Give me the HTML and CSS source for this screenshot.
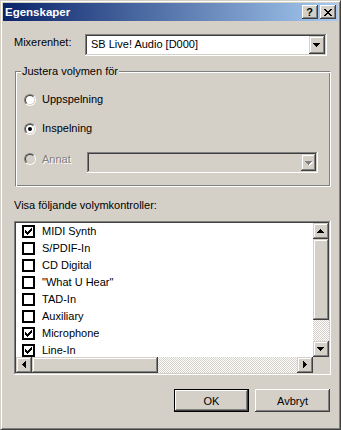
FILE: index.html
```html
<!DOCTYPE html>
<html>
<head>
<meta charset="utf-8">
<title>Egenskaper</title>
<link rel="stylesheet" href="styles.css">
</head>
<body>
<div class="window">
  <div class="titlebar">
    <span class="title">Egenskaper</span>
    <div class="capbtns">
      <div class="capbtn help">?</div>
      <div class="capbtn close">
        <svg width="8" height="7" viewBox="0 0 8 7"><path d="M0 0h2v1h-2zM6 0h2v1h-2zM1 1h2v1h-2zM5 1h2v1h-2zM2 2h4v1h-4zM3 3h2v1h-2zM2 4h4v1h-4zM1 5h2v1h-2zM5 5h2v1h-2zM0 6h2v1h-2zM6 6h2v1h-2z" fill="#000"/></svg>
      </div>
    </div>
  </div>
  <div class="content">
    <div class="row-mixer">
      <span class="mixer-label">Mixerenhet:</span>
      <div class="combo combo-wide">
        <span class="combo-text">SB Live! Audio [D000]</span>
        <div class="dropbtn raised-s">
          <svg width="16" height="16" viewBox="0 0 16 16"><path d="M4 7h7v1h-1v1h-1v1h-1v1h-1v-1h-1v-1h-1v-1h-1z" fill="#000"/></svg>
        </div>
      </div>
    </div>

    <div class="group">
      <div class="legend">Justera volymen för</div>
      <div class="radio-row r1"><span class="radio"></span><span>Uppspelning</span></div>
      <div class="radio-row r2"><span class="radio checked"></span><span>Inspelning</span></div>
      <div class="radio-row r3">
        <span class="radio disabled"></span><span class="annat">Annat</span>
        <div class="combo combo-small">
          <span class="combo-text"></span>
          <div class="dropbtn-small raised-s">
            <svg width="15" height="17" viewBox="0 0 15 17"><path d="M5 8h7v1h-1v1h-1v1h-1v1h-1v-1h-1v-1h-1v-1h-1z" fill="#fff"/><path d="M4 7h7v1h-1v1h-1v1h-1v1h-1v-1h-1v-1h-1v-1h-1z" fill="#808080"/></svg>
          </div>
        </div>
      </div>
    </div>

    <div class="visa">Visa följande volymkontroller:</div>

    <div class="listbox">
      <div class="list">
        <div class="item"><svg class="cb" width="13" height="13" viewBox="0 0 13 13"><rect x="1" y="1" width="11" height="11" fill="#fff" stroke="#000" stroke-width="2"/><path class="tick" d="M3 5L3 8L4 8L4 9L5 9L5 10L6 10L6 9L7 9L7 8L8 8L8 7L9 7L9 6L10 6L10 3L9 3L9 4L8 4L8 5L7 5L7 6L6 6L6 7L5 7L5 6L4 6L4 5Z"/></svg><span>MIDI Synth</span></div>
        <div class="item"><svg class="cb" width="13" height="13" viewBox="0 0 13 13"><rect x="1" y="1" width="11" height="11" fill="#fff" stroke="#000" stroke-width="2"/></svg><span>S/PDIF-In</span></div>
        <div class="item"><svg class="cb" width="13" height="13" viewBox="0 0 13 13"><rect x="1" y="1" width="11" height="11" fill="#fff" stroke="#000" stroke-width="2"/></svg><span>CD Digital</span></div>
        <div class="item"><svg class="cb" width="13" height="13" viewBox="0 0 13 13"><rect x="1" y="1" width="11" height="11" fill="#fff" stroke="#000" stroke-width="2"/></svg><span>"What U Hear"</span></div>
        <div class="item"><svg class="cb" width="13" height="13" viewBox="0 0 13 13"><rect x="1" y="1" width="11" height="11" fill="#fff" stroke="#000" stroke-width="2"/></svg><span>TAD-In</span></div>
        <div class="item"><svg class="cb" width="13" height="13" viewBox="0 0 13 13"><rect x="1" y="1" width="11" height="11" fill="#fff" stroke="#000" stroke-width="2"/></svg><span>Auxiliary</span></div>
        <div class="item"><svg class="cb" width="13" height="13" viewBox="0 0 13 13"><rect x="1" y="1" width="11" height="11" fill="#fff" stroke="#000" stroke-width="2"/><path class="tick" d="M3 5L3 8L4 8L4 9L5 9L5 10L6 10L6 9L7 9L7 8L8 8L8 7L9 7L9 6L10 6L10 3L9 3L9 4L8 4L8 5L7 5L7 6L6 6L6 7L5 7L5 6L4 6L4 5Z"/></svg><span>Microphone</span></div>
        <div class="item"><svg class="cb" width="13" height="13" viewBox="0 0 13 13"><rect x="1" y="1" width="11" height="11" fill="#fff" stroke="#000" stroke-width="2"/><path class="tick" d="M3 5L3 8L4 8L4 9L5 9L5 10L6 10L6 9L7 9L7 8L8 8L8 7L9 7L9 6L10 6L10 3L9 3L9 4L8 4L8 5L7 5L7 6L6 6L6 7L5 7L5 6L4 6L4 5Z"/></svg><span>Line-In</span></div>
      </div>
      <div class="vscroll">
        <div class="sbtn raised-s"><svg width="16" height="16" viewBox="0 0 16 16"><path d="M7 6h1v1h1v1h1v1h1v1h-7v-1h1v-1h1v-1h1z" fill="#000"/></svg></div>
        <div class="vthumb raised-s"></div>
        <div class="track"></div>
        <div class="sbtn raised-s"><svg width="16" height="16" viewBox="0 0 16 16"><path d="M4 6h7v1h-1v1h-1v1h-1v1h-1v-1h-1v-1h-1v-1h-1z" fill="#000"/></svg></div>
      </div>
      <div class="hscroll">
        <div class="sbtn raised-s"><svg width="16" height="16" viewBox="0 0 16 16"><path d="M6 7h1v-1h1v-1h1v-1h1v7h-1v-1h-1v-1h-1v-1h-1z" fill="#000"/></svg></div>
        <div class="hthumb raised-s"></div>
        <div class="track"></div>
        <div class="sbtn raised-s"><svg width="16" height="16" viewBox="0 0 16 16"><path d="M6 4h1v1h1v1h1v1h1v1h-1v1h-1v1h-1v1h-1z" fill="#000"/></svg></div>
      </div>
      <div class="corner"></div>
    </div>

    <div class="buttons">
      <button class="btn btn-default">OK</button>
      <button class="btn">Avbryt</button>
    </div>
  </div>
</div>
</body>
</html>
```

FILE: styles.css
```css
html, body {
  margin: 0;
  padding: 0;
}
body {
  width: 341px;
  height: 430px;
  overflow: hidden;
  background: #d4d0c8;
  font-family: "Liberation Sans", Arial, sans-serif;
  font-size: 11px;
  line-height: 13px;
  color: #000;
}
.window {
  box-sizing: border-box;
  width: 341px;
  height: 430px;
  border: 1px solid;
  border-color: #d4d0c8 #404040 #404040 #d4d0c8;
  box-shadow: inset 1px 1px #fff, inset -1px -1px #808080;
  padding: 2px;
  background: #d4d0c8;
  display: flex;
  flex-direction: column;
}
.titlebar {
  height: 18px;
  flex: none;
  background: linear-gradient(to right, #0a246a, #a6caf0);
  display: flex;
  align-items: center;
  justify-content: space-between;
}
.title {
  color: #fff;
  font-weight: bold;
  font-size: 11.5px;
  padding-left: 2px;
}
.capbtns {
  display: flex;
  gap: 2px;
  margin-right: 2px;
}
.capbtn {
  width: 16px;
  height: 14px;
  box-sizing: border-box;
  background: #d4d0c8;
  box-shadow: inset -1px -1px #404040, inset 1px 1px #fff, inset -2px -2px #808080, inset 2px 2px #d4d0c8;
  display: flex;
  align-items: center;
  justify-content: center;
}
.help {
  font-weight: bold;
  font-size: 11px;
  line-height: 14px;
  padding-right: 1px;
}
.close svg {
  display: block;
  margin-left: -1px;
}
.raised-s {
  background: #d4d0c8;
  box-shadow: inset -1px -1px #404040, inset 1px 1px #d4d0c8, inset -2px -2px #808080, inset 2px 2px #fff;
}
.content {
  flex: 1;
  padding: 13px 7px 0 11px;
  display: flex;
  flex-direction: column;
}
.row-mixer {
  display: flex;
  height: 22px;
}
.mixer-label {
  width: 71px;
  flex: none;
  margin-top: 2px;
}
.combo {
  box-sizing: border-box;
  padding: 2px;
  background: #fff;
  box-shadow: inset -1px -1px #fff, inset 1px 1px #808080, inset -2px -2px #d4d0c8, inset 2px 2px #404040;
  display: flex;
}
.combo-wide {
  width: 242px;
  height: 22px;
}
.combo-text {
  flex: 1;
  padding: 2px 0 0 4px;
}
.dropbtn {
  width: 16px;
  height: 18px;
  flex: none;
}
.dropbtn svg, .dropbtn-small svg, .sbtn svg {
  display: block;
}
.group {
  box-sizing: border-box;
  margin: 15px 0 0 1px;
  width: 316px;
  height: 116px;
  border: 1px solid;
  border-color: #808080 #fff #fff #808080;
  box-shadow: inset 1px 1px #fff, inset -1px -1px #808080;
  padding-left: 8px;
  display: flex;
  flex-direction: column;
  align-items: flex-start;
}
.legend {
  margin: -7px 0 0 -3px;
  padding: 0 1px;
  background: #d4d0c8;
  height: 13px;
}
.radio-row {
  display: flex;
  align-items: flex-start;
  height: 13px;
}
.r1 { margin-top: 15px; }
.r2 { margin-top: 16px; }
.r3 { margin-top: 17px; height: 21px; }
.radio {
  position: relative;
  flex: none;
  box-sizing: border-box;
  width: 12px;
  height: 12px;
  margin: 1px 6px 0 0;
  border-radius: 50%;
  border: 1px solid;
  border-color: #808080 #fff #fff #808080;
}
.radio::before {
  content: "";
  display: block;
  box-sizing: border-box;
  width: 10px;
  height: 10px;
  border-radius: 50%;
  border: 1px solid;
  border-color: #404040 #d4d0c8 #d4d0c8 #404040;
  background: #fff;
}
.radio.checked::after {
  content: "";
  position: absolute;
  left: 3px;
  top: 3px;
  width: 4px;
  height: 4px;
  border-radius: 50%;
  background: #000;
}
.radio.disabled::before {
  background: #d4d0c8;
}
.annat {
  width: 45px;
  flex: none;
  color: #808080;
  text-shadow: 1px 1px #fff;
  margin-top: 1px;
}
.combo-small {
  width: 231px;
  height: 21px;
  background: #d4d0c8;
}
.dropbtn-small {
  width: 15px;
  height: 17px;
  flex: none;
}
.visa {
  margin-top: 12px;
}
.listbox {
  margin-top: 9px;
  box-sizing: border-box;
  width: 317px;
  height: 154px;
  padding: 2px;
  background: #fff;
  box-shadow: inset -1px -1px #fff, inset 1px 1px #808080, inset -2px -2px #d4d0c8, inset 2px 2px #404040;
  display: grid;
  grid-template-columns: 297px 16px;
  grid-template-rows: 134px 16px;
}
.list {
  overflow: hidden;
}
.item {
  height: 17px;
  display: flex;
  align-items: center;
  padding-left: 6px;
}
.cb {
  display: block;
  flex: none;
  margin-right: 7px;
}
.tick {
  fill: #000;
}
.vscroll {
  display: flex;
  flex-direction: column;
}
.hscroll {
  display: flex;
}
.sbtn {
  width: 16px;
  height: 16px;
  flex: none;
}
.vthumb {
  height: 81px;
  flex: none;
}
.hthumb {
  width: 126px;
  flex: none;
}
.track {
  flex: 1;
  background-color: #fff;
  background-image: conic-gradient(#d4d0c8 25%, #fff 0 50%, #d4d0c8 0 75%, #fff 0);
  background-size: 2px 2px;
}
.corner {
  background: #d4d0c8;
}
.buttons {
  display: flex;
  justify-content: flex-end;
  gap: 6px;
  margin-top: 14px;
  padding-right: 1px;
}
.btn {
  width: 75px;
  height: 23px;
  box-sizing: border-box;
  margin: 0;
  padding: 0;
  border: none;
  font-family: inherit;
  font-size: 11px;
  color: #000;
  background: #d4d0c8;
  box-shadow: inset -1px -1px #404040, inset 1px 1px #fff, inset -2px -2px #808080, inset 2px 2px #d4d0c8;
}
.btn-default {
  border: 1px solid #000;
}
```
